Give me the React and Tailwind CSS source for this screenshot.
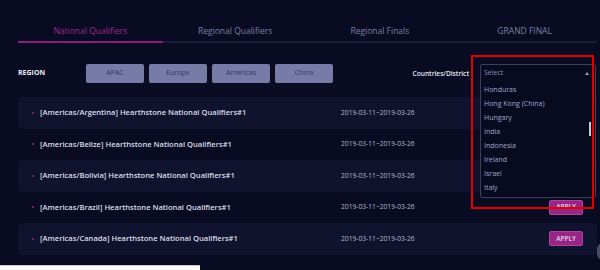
const TABS = ['National Qualifiers', 'Regional Qualifiers', 'Regional Finals', 'GRAND FINAL']
const REGIONS = ['APAC', 'Europe', 'Americas', 'China']
const COUNTRIES = ['Honduras', 'Hong Kong (China)', 'Hungary', 'India', 'Indonesia', 'Ireland', 'Israel', 'Italy']
const ROWS = ['Argentina', 'Belize', 'Bolivia', 'Brazil', 'Canada']

export default function App() {
  return (
    <div
      className="relative w-[600px] h-[270px] overflow-hidden bg-[#090b22]"
      style={{ fontFamily: '"Open Sans", "Noto Sans", sans-serif' }}
    >
      {/* Tabs */}
      <div className="ml-[18px] mr-[3px] pt-[24px] grid grid-cols-4 border-b-2 border-[#1a1d3a]">
        {TABS.map((t, i) => (
          <div
            key={t}
            className={
              'text-center text-[8.5px] leading-[14px] pb-[3px] -mb-[2px] border-b-2 ' +
              (i === 0 ? 'text-[#9a2a8d] border-[#8a1f80]' : 'text-[#7b7fa3] border-transparent')
            }
          >
            {t}
          </div>
        ))}
      </div>

      {/* Region filter */}
      <div className="ml-[18px] mr-[4px] mt-[21px] h-[19px] flex items-center">
        <div className="w-[68px] text-[7px] font-bold text-[#e8eaf4]">REGION</div>
        <div className="flex gap-[5px]">
          {REGIONS.map(r => (
            <div
              key={r}
              className="w-[58px] h-[19px] rounded-[2px] bg-[#777ca6] text-[#34385c] text-[7px] flex items-center justify-center"
            >
              {r}
            </div>
          ))}
        </div>
        <div className="ml-auto text-[6.6px] font-semibold text-[#e8eaf4] mr-[11px]">Countries/District</div>
        <div className="relative w-[116px] h-[20px]">
          {/* Dropdown */}
          <div className="absolute left-0 top-0 w-[116px] h-[134px] z-10 rounded-[2px] border border-[#3b3f5a] bg-[#080a20]">
            <div className="flex items-center h-[18px] pl-[3px] pr-[6px] text-[7px] text-[#8a8eae]">
              Select
              <svg className="ml-auto" width="4" height="3" viewBox="0 0 4 3">
                <path d="M0 3 L2 0 L4 3 Z" fill="#9a9ebb" />
              </svg>
            </div>
            {COUNTRIES.map(c => (
              <div key={c} className="h-[14px] leading-[14px] pl-[3px] text-[7px] text-[#a3a7c6]">
                {c}
              </div>
            ))}
            <div className="absolute right-[4px] top-[57px] w-[2px] h-[14px] bg-[#c9cad4]" />
          </div>
          {/* Red highlight */}
          <div className="absolute -left-[9px] -top-[9px] w-[123px] h-[154px] z-20 border-2 border-[#e00000] pointer-events-none" />
        </div>
      </div>

      {/* Tournament list */}
      <div className="ml-[18px] mr-[3px] mt-[14px]">
        {ROWS.map((c, i) => (
          <div
            key={c}
            className={'h-[31.5px] flex items-center rounded-[3px] ' + (i % 2 === 0 ? 'bg-[#10132d]' : '')}
          >
            <div className="w-[323px] flex items-center pl-[14px]">
              <span className="w-[2px] h-[2px] rounded-full bg-[#8a2a80] mr-[6px]" />
              <span className="text-[7.6px] font-semibold text-[#dcdeea]">
                [Americas/{c}] Hearthstone National Qualifiers#1
              </span>
            </div>
            <div className="text-[6.7px] text-[#b7bacd]">2019-03-11~2019-03-26</div>
            <div className="ml-auto mr-[14px] w-[34px] h-[15px] rounded-[2px] border border-[#b4409e] bg-[#962686] text-[6.5px] font-semibold text-[#ecd0ea] flex items-center justify-center">
              APPLY
            </div>
          </div>
        ))}
      </div>

      {/* Bottom-left popup edge */}
      <div className="absolute left-0 bottom-0 w-[200px] h-[5px] bg-white border-t border-[#c8c8d0]" />
      {/* Right edge floating button */}
      <div className="absolute -right-[9px] top-[243px] w-[12px] h-[17px] rounded-full bg-[#4a4d62]" />
    </div>
  )
}
